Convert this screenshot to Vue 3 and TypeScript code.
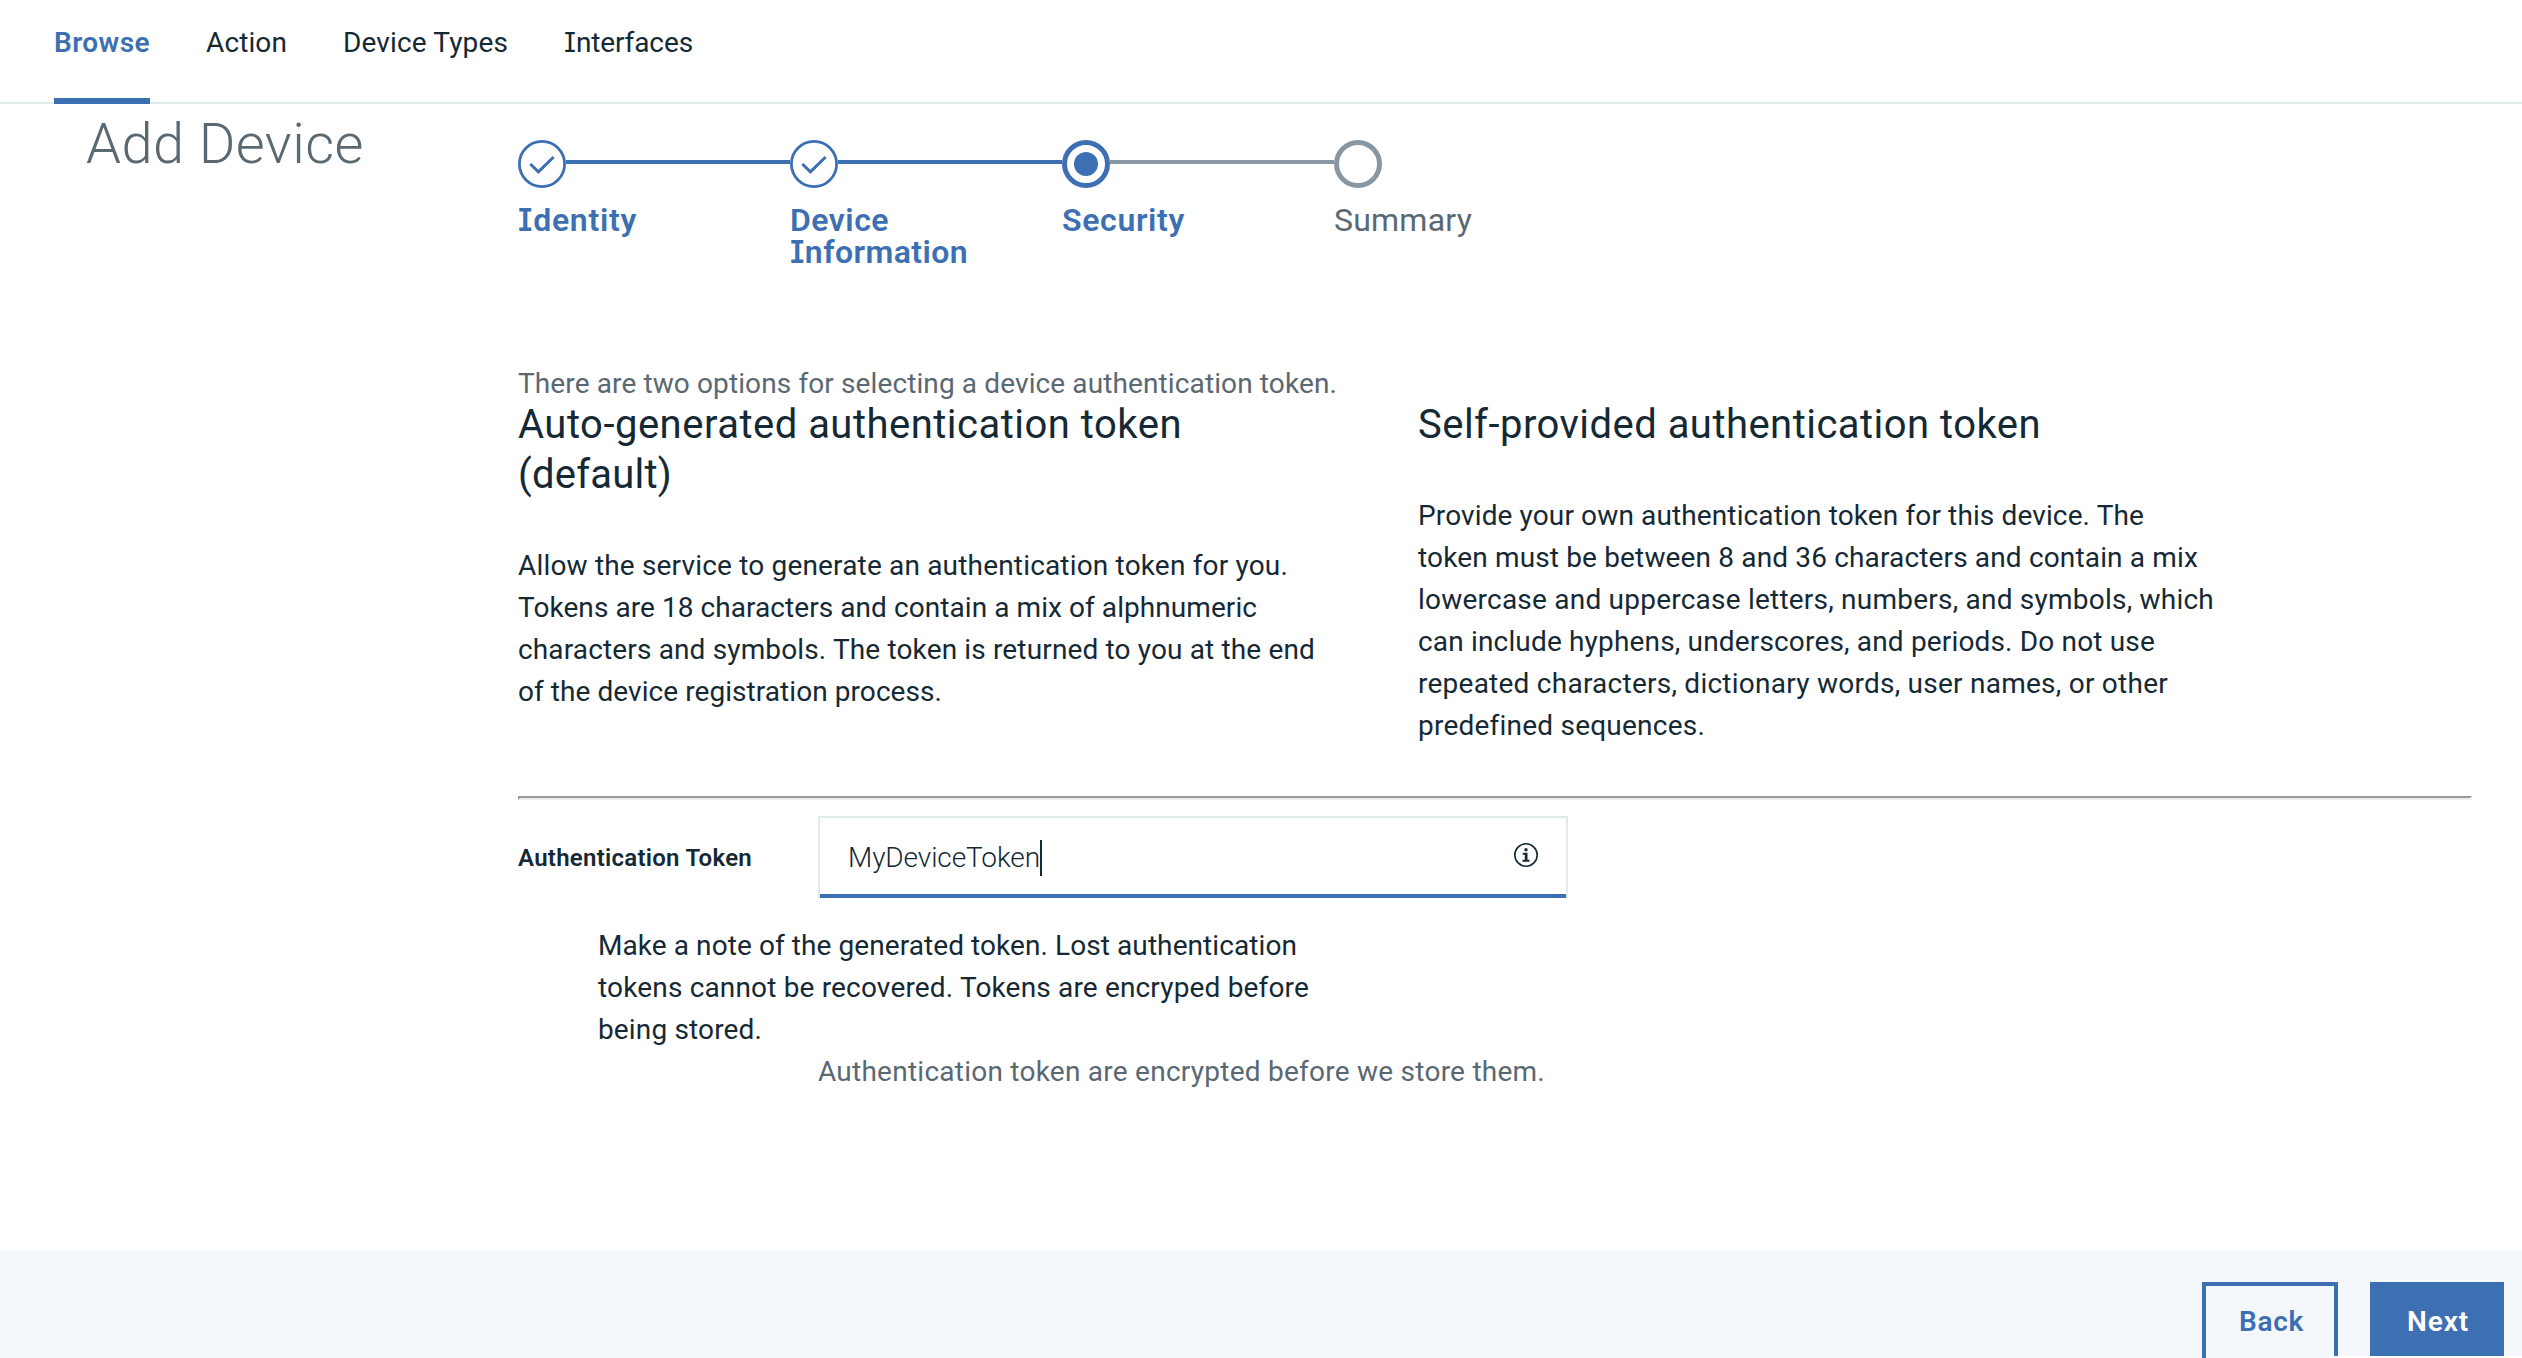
<script setup lang="ts">
interface Line {
  text: string
  width: number
}

interface Step {
  state: 'complete' | 'current' | 'incomplete'
  label: Line[]
}

const line = (text: string, width: number): Line => ({ text, width })

const tabs: Line[] = [
  line('Browse', 96),
  line('Action', 81),
  line('Device Types', 165),
  line('Interfaces', 129),
]

const steps: Step[] = [
  { state: 'complete', label: [line('Identity', 119)] },
  { state: 'complete', label: [line('Device', 99), line('Information', 178)] },
  { state: 'current', label: [line('Security', 123)] },
  { state: 'incomplete', label: [line('Summary', 138)] },
]

const options = [
  {
    heading: [line('Auto-generated authentication token', 664), line('(default)', 154)],
    body: [
      line('Allow the service to generate an authentication token for you.', 770),
      line('Tokens are 18 characters and contain a mix of alphnumeric', 739),
      line('characters and symbols. The token is returned to you at the end', 797),
      line('of the device registration process.', 424),
    ],
  },
  {
    heading: [line('Self-provided authentication token', 623)],
    body: [
      line('Provide your own authentication token for this device. The', 726),
      line('token must be between 8 and 36 characters and contain a mix', 780),
      line('lowercase and uppercase letters, numbers, and symbols, which', 796),
      line('can include hyphens, underscores, and periods. Do not use', 737),
      line('repeated characters, dictionary words, user names, or other', 750),
      line('predefined sequences.', 286),
    ],
  },
]

const note: Line[] = [
  line('Make a note of the generated token. Lost authentication', 699),
  line('tokens cannot be recovered. Tokens are encryped before', 711),
  line('being stored.', 164),
]

// Tracks a line of text so that it sets to the given measure.
const vMeasure = {
  mounted(el: HTMLElement, binding: { value: number }) {
    const count = (el.textContent ?? '').trim().length
    const natural = el.getBoundingClientRect().width
    el.style.letterSpacing = `${(binding.value - natural) / count}px`
  },
}
</script>

<template>
  <div class="page">
    <nav class="tabs">
      <a v-for="(tab, i) in tabs" :key="tab.text" class="tab" :class="{ active: i === 0, serif: i === 3 }">
        <span v-measure="tab.width" class="ln">{{ tab.text }}</span>
      </a>
    </nav>

    <main class="main">
      <h1 class="title"><span v-measure="278" class="ln">Add Device</span></h1>

      <section class="content">
        <ol class="steps">
          <li v-for="(step, i) in steps" :key="i" class="step" :class="step.state">
            <div class="track">
              <svg class="dot" viewBox="0 0 48 48" width="48" height="48">
                <template v-if="step.state === 'complete'">
                  <circle cx="24" cy="24" r="22.6" stroke-width="2.8" />
                  <path d="M12.3 24 20.4 31.9 35.6 17" stroke-width="3" />
                </template>
                <template v-else>
                  <circle cx="24" cy="24" r="21.5" stroke-width="5" />
                  <circle v-if="step.state === 'current'" class="core" cx="24" cy="24" r="12" />
                </template>
              </svg>
              <span v-if="i < steps.length - 1" class="rail"></span>
            </div>
            <div class="label">
              <span
                v-for="l in step.label"
                :key="l.text"
                v-measure="l.width"
                class="ln"
                :class="{ slab: l.text.startsWith('I') }"
                >{{ l.text }}</span
              >
            </div>
          </li>
        </ol>

        <p class="intro">
          <span v-measure="819" class="ln">There are two options for selecting a device authentication token.</span>
        </p>

        <div class="options">
          <article v-for="(option, i) in options" :key="i" class="option">
            <h2>
              <span v-for="l in option.heading" :key="l.text" v-measure="l.width" class="ln">{{ l.text }}</span>
            </h2>
            <p>
              <span v-for="l in option.body" :key="l.text" v-measure="l.width" class="ln">{{ l.text }}</span>
            </p>
          </article>
        </div>

        <hr class="rule" />

        <div class="field">
          <label class="field-label"><span v-measure="234" class="ln">Authentication Token</span></label>
          <div class="input">
            <span v-measure="192" class="ln value">MyDeviceToken</span>
            <span class="caret"></span>
            <svg class="info" viewBox="0 0 24 24" width="24" height="24">
              <circle cx="12" cy="12" r="11.2" fill="none" stroke="#152935" stroke-width="1.6" />
              <circle cx="12" cy="6.8" r="1.7" />
              <path d="M8.7 9.8h4.8v7h2v2H8.5v-2h2.3v-5H8.7z" />
            </svg>
          </div>
        </div>

        <p class="note">
          <span v-for="l in note" :key="l.text" v-measure="l.width" class="ln">{{ l.text }}</span>
        </p>
        <p class="helper">
          <span v-measure="727" class="ln">Authentication token are encrypted before we store them.</span>
        </p>
      </section>
    </main>

    <footer class="footer">
      <button class="btn secondary"><span v-measure="65" class="ln">Back</span></button>
      <button class="btn primary"><span v-measure="62" class="ln">Next</span></button>
      <span class="edge"></span>
    </footer>
  </div>
</template>

<style>
body {
  margin: 0;
  background: #fff;
}
</style>

<style scoped>
.page {
  display: flex;
  flex-direction: column;
  width: 2522px;
  height: 1358px;
  overflow: hidden;
  font-family: Roboto, 'Noto Sans', sans-serif;
  font-size: 28px;
  line-height: 42px;
  color: #152935;
  background: #fff;
}

h1,
h2,
p,
ol {
  margin: 0;
  padding: 0;
  font-weight: 400;
}

.ln {
  display: block;
  width: fit-content;
  white-space: nowrap;
}

.tabs {
  display: flex;
  flex: none;
  gap: 56px;
  box-sizing: border-box;
  height: 104px;
  padding-left: 54px;
  box-shadow: inset 0 -2px #dfeaea;
}

.tab {
  box-sizing: border-box;
  height: 104px;
  padding-top: 22px;
}

.tab.active {
  font-weight: 600;
  color: #3d70b2;
  border-bottom: 6px solid #3d70b2;
}

.serif .ln::first-letter,
.slab::first-letter {
  font-family: Inter;
  font-size: 0.97em;
  font-feature-settings: 'cv08', 'ss02';
}

.main {
  display: flex;
  flex: 1;
  min-height: 0;
}

.title {
  flex: none;
  box-sizing: border-box;
  width: 518px;
  padding: 8px 0 0 86px;
  font-size: 56px;
  font-weight: 340;
  line-height: 64px;
  color: #5a6872;
}

.content {
  width: 1954px;
  padding-top: 36px;
}

.steps {
  display: flex;
  height: 129px;
  list-style: none;
}

.step {
  width: 272px;
  color: #3d70b2;
}

.track {
  display: flex;
  height: 48px;
}

.dot {
  flex: none;
  fill: none;
  stroke: currentColor;
}

.core {
  fill: currentColor;
  stroke: none;
}

.rail {
  flex: 1;
  height: 4px;
  margin-top: 20px;
  background: #3d70b2;
}

.current .rail {
  background: #8897a2;
}

.incomplete .dot {
  color: #8897a2;
}

.label {
  margin-top: 16px;
  font-size: 32px;
  font-weight: 600;
  line-height: 32px;
}

.incomplete .label {
  font-weight: 400;
  color: #5a6872;
}

.intro {
  height: 31px;
  margin-top: 99px;
  line-height: 32px;
  color: #5a6872;
}

.options {
  display: flex;
}

.option {
  width: 900px;
}

.option h2 {
  padding-top: 1px;
  margin-bottom: 45px;
  font-size: 40px;
  line-height: 50px;
}

.rule {
  height: 0;
  margin: 49px 0 16px;
  border: 2px solid;
  border-color: #9a9a9a #eee #eee #9a9a9a;
}

.field {
  display: flex;
  height: 82px;
}

.field-label {
  width: 300px;
  padding-top: 26px;
  font-size: 24px;
  font-weight: 600;
  line-height: 32px;
}

.input {
  display: flex;
  box-sizing: border-box;
  width: 750px;
  height: 82px;
  padding: 22px 28px 0 28px;
  border: 2px solid #dfeaea;
  border-bottom: 0;
  box-shadow: inset 0 -4px #3d70b2;
}

.value {
  font-weight: 300;
  line-height: 36px;
}

.caret {
  width: 2px;
  height: 36px;
  background: #152935;
}

.info {
  margin: 3px 0 0 auto;
  fill: #152935;
}

.note {
  margin: 27px 0 0 80px;
}

.helper {
  margin-left: 300px;
  color: #5a6872;
}

.footer {
  position: relative;
  display: flex;
  flex: none;
  justify-content: flex-end;
  gap: 32px;
  box-sizing: border-box;
  height: 108px;
  padding: 32px 18px 0;
  background: #f4f7fb;
}

.btn {
  display: block;
  box-sizing: border-box;
  height: 80px;
  margin: 0;
  padding: 18px 0 18px 33px;
  border: 4px solid #3d70b2;
  font: 600 28px/36px Roboto, 'Noto Sans', sans-serif;
  text-align: left;
}

.secondary {
  width: 136px;
  color: #3d70b2;
  background: transparent;
}

.primary {
  width: 134px;
  color: #fff;
  background: #3d70b2;
}

.edge {
  position: absolute;
  right: 0;
  bottom: 0;
  width: 192px;
  height: 2px;
  background: #fff;
}
</style>
